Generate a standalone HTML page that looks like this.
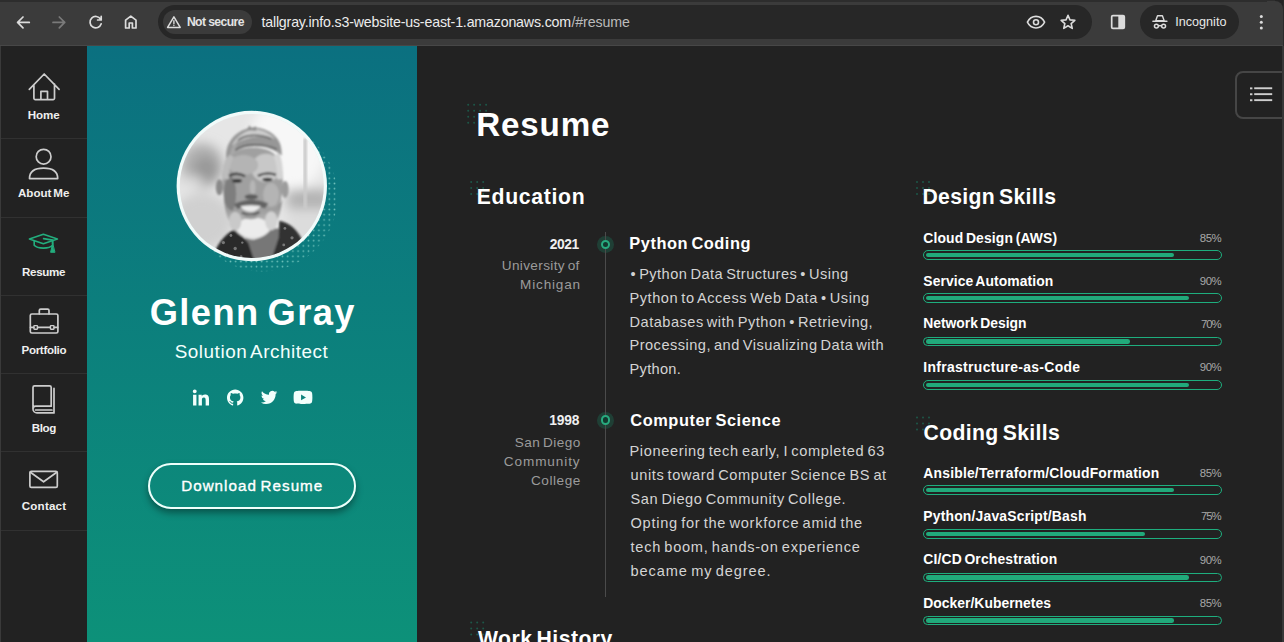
<!DOCTYPE html>
<html lang="en">
<head>
<meta charset="utf-8">
<title>Glenn Gray - Resume</title>
<style>
*{margin:0;padding:0;box-sizing:border-box}
html,body{width:1284px;height:642px;overflow:hidden;background:#222}
body{position:relative;font-family:"Liberation Sans",sans-serif;-webkit-font-smoothing:antialiased}
#txt div{position:absolute;white-space:pre;line-height:1}
#txt .med{-webkit-text-stroke:0.35px #fff}
.abs{position:absolute}
/* browser chrome */
#chrome{position:absolute;left:0;top:0;width:1284px;height:46px;background:#3b3b3b;border-bottom:1px solid #474747}
#chrome .top{position:absolute;left:0;top:0;width:1284px;height:2px;background:#2d2d2d}
#omni{position:absolute;left:157.5px;top:5px;width:934.5px;height:33.6px;border-radius:17px;background:#272727}
#chip{position:absolute;left:162.5px;top:10.3px;width:89.7px;height:23.6px;border-radius:12px;background:#3b3b3b}
#incog{position:absolute;left:1139.8px;top:5px;width:99.2px;height:33.6px;border-radius:17px;background:#272727}
/* layout */
#side{position:absolute;left:0;top:46px;width:87px;height:596px;background:#222;border-left:1px solid #3a3a3a}
#side .dv{position:absolute;left:0;width:86px;height:1px;background:#313131}
#teal{position:absolute;left:87px;top:46px;width:330px;height:596px;background:linear-gradient(180deg,#0b7080 0%,#0d9179 100%)}
#main{position:absolute;left:417px;top:46px;width:867px;height:596px;background:#222}
#fab{position:absolute;left:1235px;top:71px;width:60px;height:48.4px;border:2px solid #464646;border-radius:8px;background:#222}
#btn{position:absolute;left:148px;top:463px;width:208.2px;height:46px;border:2.2px solid #eefffb;border-radius:23px;box-shadow:0 4px 7px rgba(0,0,0,.38)}
.tl{position:absolute;left:605px;top:232px;width:1px;height:364.5px;background:#4b4b4b}
.mk{position:absolute;width:17px;height:17px;border-radius:50%;background:rgba(22,170,125,.22)}
.rg{position:absolute;width:9.4px;height:9.4px;border-radius:50%;border:2.3px solid #28ab7f;background:#13392f}
.bar{position:absolute;left:923px;width:299px;height:9.8px;border:1.1px solid #1eae7e;border-radius:5px}
.bar i{position:absolute;left:1.6px;top:1.5px;height:4.6px;border-radius:2.3px;background:#21aa7b}
</style>
</head>
<body>
<div id="main"></div>
<div id="teal"></div>
<div id="side">
  <div class="dv" style="top:92px"></div><div class="dv" style="top:171px"></div><div class="dv" style="top:249px"></div>
  <div class="dv" style="top:327px"></div><div class="dv" style="top:405px"></div><div class="dv" style="top:484px"></div>
</div>
<div id="chrome"><div class="top"></div><div class="abs" style="right:0;top:0;width:9px;height:9px;background:#242424"></div><div class="abs" style="right:1px;top:1px;width:16px;height:16px;border-top-right-radius:8px;background:#3b3b3b"></div><div class="abs" style="right:0;top:0;width:1px;height:46px;background:#2a2a2a"></div><div id="omni"></div><div id="chip"></div><div id="incog"></div></div>
<div id="fab"></div>
<div id="btn"></div>
<div class="abs" style="left:1282.4px;top:46px;width:1.6px;height:596px;background:#373737"></div>
<div class="mk" style="left:597.1px;top:236px"></div>
<div class="mk" style="left:597.1px;top:411.6px"></div>
<div class="tl"></div>
<div class="rg" style="left:600.9px;top:239.8px"></div>
<div class="rg" style="left:600.9px;top:415.4px"></div>
<div class="bar" style="top:250.2px"><i style="width:248.4px"></i></div>
<div class="bar" style="top:293.3px"><i style="width:263.0px"></i></div>
<div class="bar" style="top:336.5px"><i style="width:204.5px"></i></div>
<div class="bar" style="top:380.0px"><i style="width:263.0px"></i></div>
<div class="bar" style="top:485.4px"><i style="width:248.4px"></i></div>
<div class="bar" style="top:529.2px"><i style="width:219.2px"></i></div>
<div class="bar" style="top:572.5px"><i style="width:263.0px"></i></div>
<div class="bar" style="top:615.5px"><i style="width:248.4px"></i></div>
<svg class="abs" style="left:0;top:0" width="1284" height="642" viewBox="0 0 1284 642">
<defs>
  <pattern id="dots" x="0.4" y="0.2" width="5.2" height="5.2" patternUnits="userSpaceOnUse"><circle cx="1.3" cy="1.3" r=".85" fill="#a8eadd"/></pattern>
  <clipPath id="avc"><circle cx="251.8" cy="186" r="72"/></clipPath>
  <filter id="bgb" x="-30%" y="-30%" width="160%" height="160%"><feGaussianBlur stdDeviation="22"/></filter>
  <filter id="pb" x="-10%" y="-10%" width="120%" height="120%"><feGaussianBlur stdDeviation="5.5"/></filter>
  <filter id="sb" x="-10%" y="-10%" width="120%" height="120%"><feGaussianBlur stdDeviation="2.5"/></filter>
  <linearGradient id="bg1" x1="0" y1="0" x2="0" y2="1"><stop offset="0" stop-color="#858585"/><stop offset=".45" stop-color="#adadad"/><stop offset="1" stop-color="#e2e2e2"/></linearGradient>
  <filter id="b3" x="-30%" y="-30%" width="160%" height="160%"><feGaussianBlur stdDeviation="3"/></filter>
  <filter id="b6" x="-30%" y="-30%" width="160%" height="160%"><feGaussianBlur stdDeviation="6"/></filter>
  <filter id="b15" x="-30%" y="-30%" width="160%" height="160%"><feGaussianBlur stdDeviation="1.5"/></filter>
</defs>

<!-- ===== toolbar icons ===== -->
<g fill="none" stroke="#dcdcdc" stroke-width="1.7" stroke-linecap="round" stroke-linejoin="round">
  <path d="M29.3 22.4H17.6M23 17l-5.4 5.4 5.4 5.4"/>
  <path d="M53 22.4h11.7M59.3 17l5.4 5.4-5.4 5.4" stroke="#7a7a7a"/>
  <path d="M100.6 19.2a5.7 5.7 0 1 0 .6 4.6M101.2 16.4v3.6h-3.6" />
  <path d="M125.6 28V20.2l5.2-4 5.2 4V28h-3.6v-5h-3.2v5z"/>
  <path d="M173.9 16.9l6.3 10.5h-12.6z" stroke-width="1.5"/>
  <path d="M173.9 20.6v3.2M173.9 25.4v.2" stroke-width="1.4"/>
  <path d="M1027.4 22.2c2-4 5.200-5.800 8.600-5.800s6.600 1.800 8.600 5.800c-2 4-5.200 5.800-8.600 5.800s-6.600-1.800-8.600-5.800z" stroke-width="1.6"/>
  <circle cx="1036" cy="22.200" r="2.500" stroke-width="1.600"/>
  <path d="M1068 15.300l1.950 4.550 4.900.450-3.700 3.250 1.100 4.800-4.250-2.550-4.250 2.550 1.100-4.800-3.700-3.250 4.900-.450z" stroke-width="1.600"/>
  <rect x="1111.700" y="15.600" width="12.600" height="12.800" rx="1.200" stroke-width="1.700"/>
</g>
<rect x="1118.300" y="16" width="6" height="12" fill="#dcdcdc"/>
<g fill="#dcdcdc">
  <circle cx="1261.300" cy="16.400" r="1.500"/><circle cx="1261.300" cy="22.200" r="1.500"/><circle cx="1261.300" cy="28" r="1.500"/>
  <!-- incognito -->
  <path d="M1157.500 15.800h4.900l1.700 4.800h-8.300z" fill="none" stroke="#dcdcdc" stroke-width="1.400" stroke-linejoin="round"/>
  <rect x="1152.300" y="20.400" width="15.200" height="1.500" rx=".5"/>
</g>
<g fill="none" stroke="#dcdcdc" stroke-width="1.500">
  <circle cx="1156.400" cy="26.100" r="1.950"/><circle cx="1163.600" cy="26.100" r="1.950"/><path d="M1158.600 25.700h2.800"/>
</g>

<!-- fab hamburger -->
<g fill="#cfcfcf">
  <rect x="1250" y="87.400" width="2.400" height="1.900"/><rect x="1254.200" y="87.300" width="18" height="1.900"/>
  <rect x="1250" y="93.300" width="2.400" height="1.900"/><rect x="1254.200" y="93.200" width="18" height="1.900"/>
  <rect x="1250" y="99.300" width="2.400" height="1.900"/><rect x="1254.200" y="99.200" width="18" height="1.900"/>
</g>

<!-- ===== sidebar icons ===== -->
<g fill="none" stroke="#cdcdcd" stroke-width="1.700" stroke-linecap="round" stroke-linejoin="round">
  <!-- home -->
  <path d="M29.300 89.300L44.200 74 59.100 89.300M33.900 85.200v13a1.400 1.400 0 0 0 1.400 1.400h17.800a1.400 1.400 0 0 0 1.400-1.400V84M40.900 99.400V91.300h6.600v8.100"/>
  <!-- user -->
  <circle cx="43.600" cy="156.700" r="7.400"/>
  <path d="M29.500 178.600c0-6.200 4.300-10.400 14.100-10.400s14.100 4.200 14.100 10.400z"/>
  <!-- briefcase -->
  <rect x="30.300" y="314" width="27.600" height="19" rx="1.600"/>
  <path d="M39.300 313.800v-3.200a1.400 1.400 0 0 1 1.400-1.400h6.900a1.400 1.400 0 0 1 1.400 1.400v3.200M30.500 327.400h3.300M37.600 327.400h12.700M54.100 327.400h3.600"/>
  <rect x="33.900" y="325.600" width="3.600" height="3.600" rx=".6" stroke-width="1.400"/><rect x="50.400" y="325.600" width="3.600" height="3.600" rx=".6" stroke-width="1.400"/>
  <!-- book -->
  <path d="M51.200 406.200H35.600a2.600 2.600 0 0 0-2.600 2.600v.100a4 4 0 0 0 4 4h17V388.300M33 409V387.400a1.600 1.600 0 0 1 1.600-1.600h15a1.600 1.600 0 0 1 1.600 1.600v18.800M35.600 410h16.300"/>
  <!-- envelope -->
  <rect x="29.900" y="471.400" width="27.400" height="16" rx="1.400"/>
  <path d="M30.400 472.200l13.200 9.600 13.200-9.600"/>
</g>
<!-- graduation (active) -->
<g fill="none" stroke="#23ad7d" stroke-width="1.600" stroke-linecap="round" stroke-linejoin="round">
  <path d="M43.400 234.200L29.400 239l14 4.800 14-4.800z"/>
  <path d="M34.200 241v4.300c1.600 1.900 5.200 2.800 9.200 2.800s7.600-.900 9.200-2.800V241"/>
  <path d="M43.600 238.600l9 1.500v3.600"/>
  <path d="M52.600 243.700l-2 8.600h4z" fill="#23ad7d" stroke-width="1"/>
</g>

<!-- ===== avatar ===== -->
<circle cx="262.5" cy="196.500" r="75" fill="url(#dots)" opacity=".62"/>
<circle cx="251.800" cy="186" r="75.200" fill="#f1fbfa"/>
<g clip-path="url(#avc)">
<g transform="translate(176 110) scale(.23676)">
  <rect x="0" y="0" width="642" height="642" fill="#e6e6e6"/>
  <g filter="url(#bgb)">
    <ellipse cx="470" cy="150" rx="170" ry="190" fill="#f7f7f7"/>
    <ellipse cx="110" cy="235" rx="90" ry="95" fill="#b0b0b0"/>
    <ellipse cx="125" cy="250" rx="50" ry="55" fill="#989898"/>
    <ellipse cx="60" cy="300" rx="60" ry="22" fill="#dadada"/>
    <ellipse cx="110" cy="470" rx="130" ry="120" fill="#d0d0d0"/>
    <rect x="470" y="335" width="180" height="85" fill="#b4b4b4"/>
    <rect x="470" y="430" width="180" height="110" fill="#dcdcdc"/>
  </g>
  <rect x="538" y="120" width="15" height="300" fill="#cbcbcb" filter="url(#pb)"/>
  <g filter="url(#pb)">
    <!-- neck / chest -->
    <path d="M285 500h160l-15 142H310z" fill="#777"/>
    <!-- shirt -->
    <path d="M150 642c12-62 50-118 104-142l52 62 26 80z" fill="#2c2c2c"/>
    <path d="M436 468c44 6 84 44 104 96l-36 78H400l34-104z" fill="#303030"/>
    <!-- ears -->
    <ellipse cx="183" cy="326" rx="15" ry="34" fill="#8a8a8a"/>
    <ellipse cx="461" cy="336" rx="15" ry="36" fill="#9c9c9c"/>
    <!-- head -->
    <path d="M196 300C190 200 240 158 325 158c86 0 130 42 126 142-2 100-32 200-122 246C240 520 200 420 196 300z" fill="#a0a0a0"/>
    <ellipse cx="380" cy="245" rx="62" ry="60" fill="#c8c8c8"/>
    <ellipse cx="285" cy="232" rx="62" ry="42" fill="#b4b4b4"/>
    <ellipse cx="228" cy="355" rx="26" ry="76" fill="#7e7e7e"/>
    <ellipse cx="402" cy="358" rx="34" ry="50" fill="#b4b4b4"/>
    <!-- temples -->
    <path d="M198 292c-3-52 6-84 24-106l22 12c-16 30-20 60-20 94z" fill="#bcbcbc"/>
    <path d="M450 292c4-52-4-88-16-110l-22 12c13 34 15 62 15 98z" fill="#d4d4d4"/>
    <!-- hair -->
    <path d="M212 205c-6-72 46-124 116-132 72 6 124 46 118 120-26-26-66-40-116-40-50 0-92 20-118 52z" fill="#979797"/>
    <path d="M236 150c20-42 62-66 100-70 30 4 60 18 84 44-40-22-112-20-184 26z" fill="#cdcdcd"/>
    <path d="M228 190c4-30 20-56 44-72-14 22-22 44-24 66z" fill="#a8a8a8"/>
    <path d="M250 170c30-26 110-34 176-4M262 128c30-24 90-30 140-6" stroke="#626262" stroke-width="7" fill="none"/>
    <path d="M300 84l10-20 12 18 14-14 4 20z" fill="#8a8a8a"/>
    <!-- brows / eyes -->
    <path d="M224 278q32-18 68 2M346 278q38-18 76-4" stroke="#3c3c3c" stroke-width="10" fill="none"/>
    <ellipse cx="258" cy="299" rx="21" ry="8" fill="#2b2b2b"/>
    <ellipse cx="386" cy="294" rx="21" ry="8" fill="#2b2b2b"/>
    <!-- nose -->
    <ellipse cx="324" cy="328" rx="12" ry="32" fill="#b6b6b6"/>
    <ellipse cx="318" cy="367" rx="28" ry="11" fill="#5c5c5c"/>
    <!-- beard -->
    <path d="M204 380c2 90 52 162 122 168 74-12 118-82 122-172-12 36-38 52-68 42-12 28-108 28-124 0-18 18-40 2-52-38z" fill="url(#bg1)"/>
    <ellipse cx="326" cy="496" rx="70" ry="42" fill="#ececec"/>
    <ellipse cx="250" cy="470" rx="26" ry="40" fill="#c9c9c9"/>
    <ellipse cx="402" cy="468" rx="26" ry="40" fill="#d2d2d2"/>
    <path d="M244 398q72-36 146-4l-14 22q-60-22-116 2z" fill="#646464"/>
    <path d="M272 407q44-8 86-1-18 24-42 24-28 0-44-23z" fill="#ececec"/>
    <path d="M278 434q38 18 74-2" stroke="#555" stroke-width="9" fill="none"/>
    <ellipse cx="316" cy="452" rx="30" ry="9" fill="#9a9a9a"/>
  </g>
  <!-- shirt specks -->
  <g fill="#8a8a8a" filter="url(#sb)" opacity=".8">
    <circle cx="200" cy="560" r="7"/><circle cx="232" cy="530" r="6"/><circle cx="250" cy="585" r="7"/><circle cx="215" cy="610" r="6"/><circle cx="280" cy="560" r="5"/><circle cx="275" cy="620" r="6"/><circle cx="185" cy="625" r="5"/>
    <circle cx="460" cy="500" r="6"/><circle cx="490" cy="540" r="7"/><circle cx="455" cy="570" r="6"/><circle cx="500" cy="590" r="6"/><circle cx="440" cy="620" r="6"/><circle cx="475" cy="625" r="5"/>
  </g>
</g>
</g>

<!-- ===== social icons ===== -->
<g fill="#f2fffc">
  <g transform="translate(192.800 389.400) scale(.0362)"><path d="M100.280 448H7.400V148.900h92.880zM53.790 108.100C24.090 108.100 0 83.500 0 53.800a53.790 53.790 0 0 1 107.580 0c0 29.700-24.100 54.300-53.790 54.300zM447.900 448h-92.680V302.400c0-34.700-.7-79.200-48.290-79.200-48.290 0-55.690 37.700-55.690 76.700V448h-92.780V148.900h89.080v40.800h1.300c12.400-23.500 42.690-48.300 87.880-48.300 94 0 111.280 61.900 111.280 142.300V448z"/></g>
  <g transform="translate(227 389.300) scale(.683)"><path d="M12 .297c-6.630 0-12 5.373-12 12 0 5.303 3.438 9.800 8.205 11.385.6.113.82-.258.820-.577 0-.285-.010-1.040-.015-2.040-3.338.724-4.042-1.610-4.042-1.610C4.422 18.070 3.633 17.700 3.633 17.700c-1.087-.744.084-.729.084-.729 1.205.084 1.838 1.236 1.838 1.236 1.070 1.835 2.809 1.305 3.495.998.108-.776.417-1.305.760-1.605-2.665-.300-5.466-1.332-5.466-5.930 0-1.310.465-2.380 1.235-3.220-.135-.303-.540-1.523.105-3.176 0 0 1.005-.322 3.300 1.230.960-.267 1.980-.399 3-.405 1.020.006 2.040.138 3 .405 2.280-1.552 3.285-1.230 3.285-1.230.645 1.653.240 2.873.120 3.176.765.840 1.230 1.910 1.230 3.220 0 4.610-2.805 5.625-5.475 5.920.420.360.810 1.096.810 2.220 0 1.606-.015 2.896-.015 3.286 0 .315.210.690.825.570C20.565 22.092 24 17.592 24 12.297c0-6.627-5.373-12-12-12"/></g>
  <g transform="translate(260.900 389.200) scale(.683)"><path d="M23.953 4.570a10 10 0 0 1-2.825.775 4.958 4.958 0 0 0 2.163-2.723c-.951.555-2.005.959-3.127 1.184a4.920 4.920 0 0 0-8.384 4.482C7.690 8.095 4.067 6.130 1.640 3.162a4.822 4.822 0 0 0-.666 2.475c0 1.710.870 3.213 2.188 4.096a4.904 4.904 0 0 1-2.228-.616v.060a4.923 4.923 0 0 0 3.946 4.827 4.996 4.996 0 0 1-2.212.085 4.936 4.936 0 0 0 4.604 3.417 9.867 9.867 0 0 1-6.102 2.105c-.390 0-.779-.023-1.170-.067a13.995 13.995 0 0 0 7.557 2.209c9.053 0 13.998-7.496 13.998-13.985 0-.210 0-.420-.015-.630A9.935 9.935 0 0 0 24 4.590z"/></g>
  <g transform="translate(293.600 388) scale(.783)"><path d="M23.498 6.186a3.016 3.016 0 0 0-2.122-2.136C19.505 3.545 12 3.545 12 3.545s-7.505 0-9.377.505A3.017 3.017 0 0 0 .502 6.186C0 8.070 0 12 0 12s0 3.930.502 5.814a3.016 3.016 0 0 0 2.122 2.136c1.871.505 9.376.505 9.376.505s7.505 0 9.377-.505a3.015 3.015 0 0 0 2.122-2.136C24 15.930 24 12 24 12s0-3.930-.502-5.814zM9.545 15.568V8.432L15.818 12l-6.273 3.568z"/></g>
</g>

<!-- ===== heading dot decorations ===== -->
<g fill="#1d5748">
<circle cx="468.2" cy="104.8" r="1.0"/><circle cx="468.2" cy="110.8" r="1.0"/><circle cx="468.2" cy="116.7" r="1.0"/><circle cx="468.2" cy="122.7" r="1.0"/><circle cx="474.1" cy="104.8" r="1.0"/><circle cx="474.1" cy="110.8" r="1.0"/><circle cx="474.1" cy="116.7" r="1.0"/><circle cx="474.1" cy="122.7" r="1.0"/><circle cx="480.1" cy="104.8" r="1.0"/><circle cx="480.1" cy="110.8" r="1.0"/><circle cx="480.1" cy="116.7" r="1.0"/><circle cx="480.1" cy="122.7" r="1.0"/><circle cx="486.1" cy="104.8" r="1.0"/><circle cx="486.1" cy="110.8" r="1.0"/><circle cx="486.1" cy="116.7" r="1.0"/><circle cx="486.1" cy="122.7" r="1.0"/><circle cx="471.2" cy="182.0" r="1.0"/><circle cx="471.2" cy="188.0" r="1.0"/><circle cx="471.2" cy="194.0" r="1.0"/><circle cx="477.2" cy="182.0" r="1.0"/><circle cx="477.2" cy="188.0" r="1.0"/><circle cx="477.2" cy="194.0" r="1.0"/><circle cx="483.2" cy="182.0" r="1.0"/><circle cx="483.2" cy="188.0" r="1.0"/><circle cx="483.2" cy="194.0" r="1.0"/><circle cx="917.0" cy="182.0" r="1.0"/><circle cx="917.0" cy="188.0" r="1.0"/><circle cx="917.0" cy="194.0" r="1.0"/><circle cx="923.0" cy="182.0" r="1.0"/><circle cx="923.0" cy="188.0" r="1.0"/><circle cx="923.0" cy="194.0" r="1.0"/><circle cx="929.0" cy="182.0" r="1.0"/><circle cx="929.0" cy="188.0" r="1.0"/><circle cx="929.0" cy="194.0" r="1.0"/><circle cx="917.0" cy="417.6" r="1.0"/><circle cx="917.0" cy="423.6" r="1.0"/><circle cx="917.0" cy="429.6" r="1.0"/><circle cx="923.0" cy="417.6" r="1.0"/><circle cx="923.0" cy="423.6" r="1.0"/><circle cx="923.0" cy="429.6" r="1.0"/><circle cx="929.0" cy="417.6" r="1.0"/><circle cx="929.0" cy="423.6" r="1.0"/><circle cx="929.0" cy="429.6" r="1.0"/><circle cx="471.2" cy="622.5" r="1.0"/><circle cx="471.2" cy="628.5" r="1.0"/><circle cx="471.2" cy="634.5" r="1.0"/><circle cx="477.2" cy="622.5" r="1.0"/><circle cx="477.2" cy="628.5" r="1.0"/><circle cx="477.2" cy="634.5" r="1.0"/><circle cx="483.2" cy="622.5" r="1.0"/><circle cx="483.2" cy="628.5" r="1.0"/><circle cx="483.2" cy="634.5" r="1.0"/>
</g>
</svg>

<div id="txt">
<div style="left:186.90px;top:16.07px;font-size:12.2px;color:#e3e3e3;font-weight:bold;letter-spacing:-0.601px;">Not secure</div>
<div style="left:261.40px;top:14.88px;font-size:14.2px;color:#ececec;letter-spacing:-0.166px;">tallgray.info.s3-website-us-east-1.amazonaws.com</div>
<div style="left:571.40px;top:14.88px;font-size:14.2px;color:#bcbcbc;letter-spacing:-0.079px;">/#resume</div>
<div style="left:1175.30px;top:15.93px;font-size:12.6px;color:#e8e8e8;">Incognito</div>
<div style="left:27.80px;top:109.48px;font-size:11.6px;color:#efefef;font-weight:bold;letter-spacing:-0.121px;">Home</div>
<div style="left:18.00px;top:186.98px;font-size:11.6px;color:#efefef;font-weight:bold;letter-spacing:-0.028px;word-spacing:-1.16px;">About Me</div>
<div style="left:22.00px;top:266.18px;font-size:11.6px;color:#efefef;font-weight:bold;letter-spacing:-0.332px;">Resume</div>
<div style="left:21.50px;top:344.48px;font-size:11.6px;color:#efefef;font-weight:bold;letter-spacing:-0.322px;">Portfolio</div>
<div style="left:31.75px;top:422.38px;font-size:11.6px;color:#efefef;font-weight:bold;letter-spacing:-0.392px;">Blog</div>
<div style="left:21.75px;top:500.48px;font-size:11.6px;color:#efefef;font-weight:bold;letter-spacing:0.201px;">Contact</div>
<div style="left:149.70px;top:295.17px;font-size:36.3px;color:#fff;font-weight:bold;letter-spacing:1.417px;word-spacing:-3.63px;">Glenn Gray</div>
<div style="left:174.70px;top:342.70px;font-size:18.9px;color:#f4fffd;letter-spacing:0.532px;word-spacing:-1.89px;">Solution Architect</div>
<div class="med" style="left:181.20px;top:478.13px;font-size:15.2px;color:#fff;letter-spacing:1.018px;word-spacing:-1.52px;">Download Resume</div>
<div style="left:476.30px;top:108.00px;font-size:33.2px;color:#fff;font-weight:bold;letter-spacing:0.807px;">Resume</div>
<div style="left:476.80px;top:186.05px;font-size:21.2px;color:#fff;font-weight:bold;letter-spacing:0.679px;">Education</div>
<div style="left:478.00px;top:627.85px;font-size:21.2px;color:#fff;font-weight:bold;letter-spacing:0.449px;word-spacing:-2.12px;">Work History</div>
<div style="left:922.50px;top:186.45px;font-size:21.2px;color:#fff;font-weight:bold;letter-spacing:0.310px;word-spacing:-2.12px;">Design Skills</div>
<div style="left:923.50px;top:422.05px;font-size:21.2px;color:#fff;font-weight:bold;letter-spacing:0.359px;word-spacing:-2.12px;">Coding Skills</div>
<div style="left:549.70px;top:237.82px;font-size:13.8px;color:#f0f0f0;font-weight:bold;letter-spacing:-0.373px;">2021</div>
<div style="left:501.80px;top:258.89px;font-size:13.6px;color:#9b9b9b;letter-spacing:0.346px;word-spacing:-1.36px;">University of</div>
<div style="left:520.10px;top:277.99px;font-size:13.6px;color:#9b9b9b;letter-spacing:0.808px;">Michigan</div>
<div style="left:629.30px;top:235.42px;font-size:16.4px;color:#fff;font-weight:bold;letter-spacing:0.526px;word-spacing:-1.64px;">Python Coding</div>
<div style="left:630.50px;top:266.94px;font-size:14.6px;color:#d4d4d4;letter-spacing:0.463px;word-spacing:-1.46px;">• Python Data Structures • Using</div>
<div style="left:629.50px;top:290.79px;font-size:14.6px;color:#d4d4d4;letter-spacing:0.541px;word-spacing:-1.46px;">Python to Access Web Data • Using</div>
<div style="left:629.50px;top:314.64px;font-size:14.6px;color:#d4d4d4;letter-spacing:0.493px;word-spacing:-1.46px;">Databases with Python • Retrieving,</div>
<div style="left:629.50px;top:338.49px;font-size:14.6px;color:#d4d4d4;letter-spacing:0.471px;word-spacing:-1.46px;">Processing, and Visualizing Data with</div>
<div style="left:629.50px;top:362.34px;font-size:14.6px;color:#d4d4d4;letter-spacing:0.311px;">Python.</div>
<div style="left:549.30px;top:413.52px;font-size:13.8px;color:#f0f0f0;font-weight:bold;letter-spacing:-0.173px;">1998</div>
<div style="left:514.70px;top:435.69px;font-size:13.6px;color:#9b9b9b;letter-spacing:0.442px;word-spacing:-1.36px;">San Diego</div>
<div style="left:503.80px;top:454.89px;font-size:13.6px;color:#9b9b9b;letter-spacing:0.882px;">Community</div>
<div style="left:530.90px;top:473.89px;font-size:13.6px;color:#9b9b9b;letter-spacing:0.560px;">College</div>
<div style="left:630.30px;top:411.72px;font-size:16.4px;color:#fff;font-weight:bold;letter-spacing:0.536px;word-spacing:-1.64px;">Computer Science</div>
<div style="left:629.50px;top:444.14px;font-size:14.6px;color:#d4d4d4;letter-spacing:0.618px;word-spacing:-1.46px;">Pioneering tech early, I completed 63</div>
<div style="left:630.50px;top:468.04px;font-size:14.6px;color:#d4d4d4;letter-spacing:0.601px;word-spacing:-1.46px;">units toward Computer Science BS at</div>
<div style="left:630.50px;top:491.94px;font-size:14.6px;color:#d4d4d4;letter-spacing:0.590px;word-spacing:-1.46px;">San Diego Community College.</div>
<div style="left:630.50px;top:515.84px;font-size:14.6px;color:#d4d4d4;letter-spacing:0.724px;word-spacing:-1.46px;">Opting for the workforce amid the</div>
<div style="left:630.50px;top:539.74px;font-size:14.6px;color:#d4d4d4;letter-spacing:0.729px;word-spacing:-1.46px;">tech boom, hands-on experience</div>
<div style="left:630.50px;top:563.64px;font-size:14.6px;color:#d4d4d4;letter-spacing:0.881px;word-spacing:-1.46px;">became my degree.</div>
<div style="left:923.30px;top:231.83px;font-size:13.9px;color:#fff;font-weight:bold;letter-spacing:0.138px;word-spacing:-1.39px;">Cloud Design (AWS)</div>
<div style="left:1199.80px;top:233.35px;font-size:11.4px;color:#a8a8a8;letter-spacing:-0.435px;">85%</div>
<div style="left:923.30px;top:274.83px;font-size:13.9px;color:#fff;font-weight:bold;letter-spacing:0.084px;word-spacing:-1.39px;">Service Automation</div>
<div style="left:1199.80px;top:276.35px;font-size:11.4px;color:#a8a8a8;letter-spacing:-0.435px;">90%</div>
<div style="left:923.30px;top:317.23px;font-size:13.9px;color:#fff;font-weight:bold;letter-spacing:-0.031px;word-spacing:-1.39px;">Network Design</div>
<div style="left:1201.00px;top:318.75px;font-size:11.4px;color:#a8a8a8;letter-spacing:-1.035px;">70%</div>
<div style="left:923.30px;top:360.53px;font-size:13.9px;color:#fff;font-weight:bold;letter-spacing:0.333px;">Infrastructure-as-Code</div>
<div style="left:1199.80px;top:362.05px;font-size:11.4px;color:#a8a8a8;letter-spacing:-0.435px;">90%</div>
<div style="left:923.30px;top:466.83px;font-size:13.9px;color:#fff;font-weight:bold;letter-spacing:0.199px;">Ansible/Terraform/CloudFormation</div>
<div style="left:1199.80px;top:468.35px;font-size:11.4px;color:#a8a8a8;letter-spacing:-0.435px;">85%</div>
<div style="left:923.30px;top:509.83px;font-size:13.9px;color:#fff;font-weight:bold;letter-spacing:0.193px;">Python/JavaScript/Bash</div>
<div style="left:1201.00px;top:511.35px;font-size:11.4px;color:#a8a8a8;letter-spacing:-1.035px;">75%</div>
<div style="left:923.30px;top:553.23px;font-size:13.9px;color:#fff;font-weight:bold;letter-spacing:0.140px;word-spacing:-1.39px;">CI/CD Orchestration</div>
<div style="left:1199.80px;top:554.75px;font-size:11.4px;color:#a8a8a8;letter-spacing:-0.435px;">90%</div>
<div style="left:923.30px;top:596.63px;font-size:13.9px;color:#fff;font-weight:bold;letter-spacing:0.016px;">Docker/Kubernetes</div>
<div style="left:1199.80px;top:598.15px;font-size:11.4px;color:#a8a8a8;letter-spacing:-0.435px;">85%</div>
</div>
</body>
</html>
